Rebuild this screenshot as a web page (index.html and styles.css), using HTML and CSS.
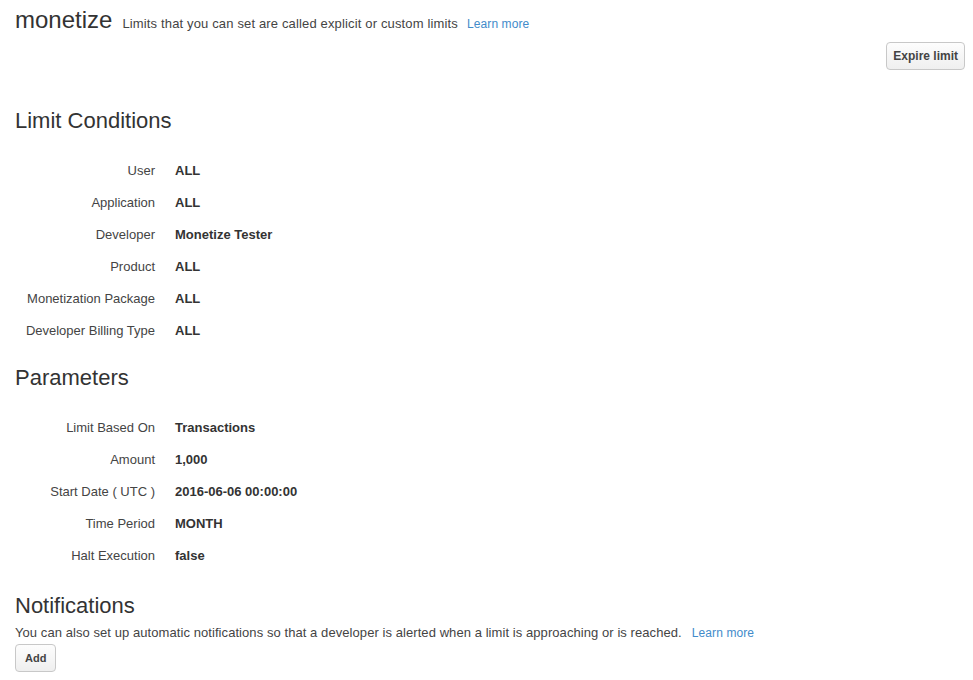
FILE: index.html
```html
<!DOCTYPE html>
<html>
<head>
<meta charset="utf-8">
<link rel="stylesheet" href="styles.css">
</head>
<body>
<div class="page">
  <div class="header">
    <h1 class="title">monetize</h1>
    <span class="subtitle">Limits that you can set are called explicit or custom limits</span>
    <a class="link" href="#">Learn more</a>
  </div>
  <div class="actions">
    <button class="btn">Expire limit</button>
  </div>

  <h2 class="section-title first">Limit Conditions</h2>
  <div class="fields">
    <div class="label">User</div><div class="value">ALL</div>
    <div class="label">Application</div><div class="value">ALL</div>
    <div class="label">Developer</div><div class="value">Monetize Tester</div>
    <div class="label">Product</div><div class="value">ALL</div>
    <div class="label">Monetization Package</div><div class="value">ALL</div>
    <div class="label">Developer Billing Type</div><div class="value">ALL</div>
  </div>

  <h2 class="section-title">Parameters</h2>
  <div class="fields params">
    <div class="label">Limit Based On</div><div class="value">Transactions</div>
    <div class="label">Amount</div><div class="value">1,000</div>
    <div class="label">Start Date ( UTC )</div><div class="value">2016-06-06 00:00:00</div>
    <div class="label">Time Period</div><div class="value">MONTH</div>
    <div class="label">Halt Execution</div><div class="value">false</div>
  </div>

  <h2 class="section-title notif">Notifications</h2>
  <p class="note"><span class="note-text">You can also set up automatic notifications so that a developer is alerted when a limit is approaching or is reached.</span><a class="link" href="#">Learn more</a></p>
  <button class="btn btn-small">Add</button>
</div>
</body>
</html>
```
FILE: styles.css
```css
html, body {
  margin: 0;
  padding: 0;
  background: #fff;
}
body {
  font-family: "Liberation Sans", Arial, sans-serif;
  font-size: 13px;
  color: #333;
}
.page {
  padding: 0 8px 0 15px;
}
.header {
  display: flex;
  align-items: baseline;
  height: 36px;
  padding-top: 1px;
}
.title {
  font-size: 24px;
  font-weight: normal;
  margin: 0 10px 0 0;
  line-height: 38px;
  color: #333;
}
.subtitle {
  font-size: 13px;
  letter-spacing: 0.15px;
  color: #444;
}
.link {
  color: #428bca;
  text-decoration: none;
  margin-left: 9px;
  font-size: 12px;
  letter-spacing: 0.1px;
}
.actions {
  display: flex;
  justify-content: flex-end;
  margin-top: 5px;
}
.btn {
  font-family: "Liberation Sans", Arial, sans-serif;
  font-size: 12px;
  font-weight: bold;
  color: #444;
  background: linear-gradient(#fdfdfd, #efefef);
  border: 1px solid #c8c8c8;
  border-radius: 4px;
  height: 28px;
  padding: 0 6px;
  cursor: pointer;
}
.section-title {
  font-size: 22px;
  font-weight: normal;
  margin: 0;
  line-height: 26px;
  color: #333;
}
.section-title.first {
  margin-top: 38px;
}
.fields {
  display: grid;
  grid-template-columns: 140px auto;
  column-gap: 20px;
  margin-top: 21px;
  margin-bottom: 18px;
}
.label {
  text-align: right;
  line-height: 32px;
  color: #444;
}
.value {
  font-weight: bold;
  line-height: 32px;
  color: #333;
}
.section-title.notif {
  margin-top: 21px;
}
.note {
  margin: 5px 0 0;
  font-size: 13px;
  line-height: 18px;
  color: #444;
}
.note-text {
  letter-spacing: 0.07px;
}
.note .link {
  margin-left: 10px;
}
.btn-small {
  display: block;
  margin-top: 2px;
  height: 28px;
  padding: 0 9px;
  font-size: 11px;
}
```
